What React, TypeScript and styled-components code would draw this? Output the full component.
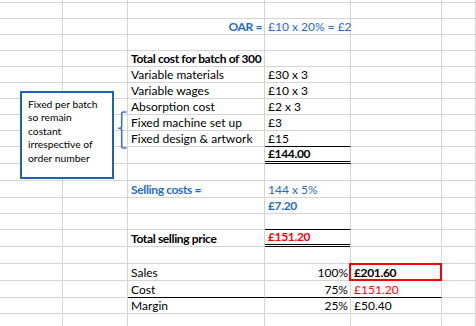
import styled, { createGlobalStyle, css } from 'styled-components';

const GlobalStyle = createGlobalStyle`
  body {
    margin: 0;
    background: #ffffff;
    font-family: Lato, 'Open Sans', sans-serif;
    overflow: hidden;
  }
`;

const colors = {
  Grid: '#d4d4d4',
  Ink: '#000000',
  Blue: '#1f6cc4',
  Red: '#ff0000',
  Frame: '#1a63b8',
  Brace: '#4472c4',
};

type Tone = 'ink' | 'blue' | 'red';
type Under = 'rule' | 'double';

interface CellSpec {
  text?: string;
  right?: boolean;
  bold?: boolean;
  tone?: Tone;
  under?: Under;
  boxed?: boolean;
}

interface RowSpec {
  h: number;
  cells?: Record<number, CellSpec>;
}

const Sheet = styled.div`
  position: relative;
  width: 476px;
  height: 326px;
  overflow: hidden;
`;

const Row = styled.div<{ $h: number }>`
  display: grid;
  grid-template-columns: 63px 65px 137px 86px 91px 1fr;
  height: ${(p) => p.$h}px;
`;

const toneColor = (t?: Tone) =>
  t === 'blue' ? colors.Blue : t === 'red' ? colors.Red : colors.Ink;

const Cell = styled.div<{
  $right?: boolean;
  $bold?: boolean;
  $tone?: Tone;
  $under?: Under;
  $boxed?: boolean;
}>`
  position: relative;
  box-sizing: border-box;
  display: flex;
  align-items: flex-end;
  justify-content: ${(p) => (p.$right ? 'flex-end' : 'flex-start')};
  padding: 0 2px 0 3px;
  border-right: 1px solid ${colors.Grid};
  border-bottom: 1px solid ${colors.Grid};
  font-size: 12px;
  line-height: 14px;
  white-space: nowrap;
  font-weight: ${(p) => (p.$bold ? 700 : 400)};
  letter-spacing: ${(p) => (p.$bold ? '-0.35px' : '0')};
  color: ${(p) => toneColor(p.$tone)};
  ${(p) =>
    p.$under === 'rule' &&
    css`
      border-bottom-color: ${colors.Ink};
    `}
  ${(p) =>
    p.$under === 'double' &&
    css`
      border-bottom: 3px double ${colors.Ink};
    `}
  /* red highlight round the sales figure */
  ${(p) =>
    p.$boxed &&
    css`
      &::after {
        content: '';
        position: absolute;
        left: -2px;
        top: -1px;
        right: -1px;
        bottom: -1px;
        border: 2px solid ${colors.Red};
      }
    `}
`;

const NoteBox = styled.div`
  position: absolute;
  left: 20px;
  top: 91px;
  width: 94px;
  height: 88px;
  box-sizing: border-box;
  border: 2px solid ${colors.Frame};
  background: #ffffff;
  padding: 5px 6px 0;
  font-size: 10.3px;
  line-height: 13.4px;
  color: ${colors.Ink};
`;

const Brace = styled.svg`
  position: absolute;
  left: 116px;
  top: 110px;
`;

const rows: RowSpec[] = [
  { h: 3 },
  { h: 16 },
  {
    h: 16,
    cells: {
      2: { text: 'OAR =', right: true, bold: true, tone: 'blue' },
      3: { text: '£10 x 20% = £2', tone: 'blue' },
    },
  },
  { h: 16 },
  { h: 16, cells: { 2: { text: 'Total cost for batch of 300', bold: true } } },
  { h: 16, cells: { 2: { text: 'Variable materials' }, 3: { text: '£30 x 3' } } },
  { h: 16, cells: { 2: { text: 'Variable wages' }, 3: { text: '£10 x 3' } } },
  { h: 16, cells: { 2: { text: 'Absorption cost' }, 3: { text: '£2 x 3' } } },
  { h: 16, cells: { 2: { text: 'Fixed machine set up' }, 3: { text: '£3' } } },
  {
    h: 16,
    cells: { 2: { text: 'Fixed design & artwork' }, 3: { text: '£15', under: 'rule' } },
  },
  { h: 17, cells: { 3: { text: '£144.00', bold: true, under: 'double' } } },
  { h: 17 },
  {
    h: 17,
    cells: {
      2: { text: 'Selling costs =', bold: true, tone: 'blue' },
      3: { text: '144 x 5%', tone: 'blue' },
    },
  },
  { h: 16, cells: { 3: { text: '£7.20', bold: true, tone: 'blue' } } },
  { h: 16, cells: { 3: { under: 'rule' } } },
  {
    h: 16,
    cells: {
      2: { text: 'Total selling price', bold: true },
      3: { text: '£151.20', bold: true, tone: 'red', under: 'double' },
    },
  },
  { h: 18 },
  {
    h: 17,
    cells: {
      2: { text: 'Sales' },
      3: { text: '100%', right: true },
      4: { text: '£201.60', bold: true, boxed: true },
    },
  },
  {
    h: 17,
    cells: {
      2: { text: 'Cost', under: 'rule' },
      3: { text: '75%', right: true, under: 'rule' },
      4: { text: '£151.20', tone: 'red', under: 'rule' },
    },
  },
  {
    h: 16,
    cells: {
      2: { text: 'Margin' },
      3: { text: '25%', right: true },
      4: { text: '£50.40' },
    },
  },
  { h: 16 },
];

export default function App() {
  return (
    <>
      <GlobalStyle />
      <Sheet>
        {rows.map((row, r) => (
          <Row key={r} $h={row.h}>
            {[0, 1, 2, 3, 4, 5].map((c) => {
              const cell = row.cells?.[c];
              return (
                <Cell
                  key={c}
                  $right={cell?.right}
                  $bold={cell?.bold}
                  $tone={cell?.tone}
                  $under={cell?.under}
                  $boxed={cell?.boxed}
                >
                  {cell?.text}
                </Cell>
              );
            })}
          </Row>
        ))}

        <NoteBox>
          Fixed per batch
          <br />
          so remain
          <br />
          costant
          <br />
          irrespective of
          <br />
          order number
        </NoteBox>

        {/* bracket joining the two fixed cost rows */}
        <Brace width="12" height="42" viewBox="0 0 12 42">
          <path
            d="M10.5 2 H7.5 Q5.7 2 5.7 4 V16.3 Q5.7 18.3 3.7 18.3 H2 M3.7 18.3 Q5.7 18.3 5.7 20.3 V36 Q5.7 38 7.5 38 H10.5"
            fill="none"
            stroke={colors.Brace}
            strokeWidth="1.6"
          />
        </Brace>
      </Sheet>
    </>
  );
}
